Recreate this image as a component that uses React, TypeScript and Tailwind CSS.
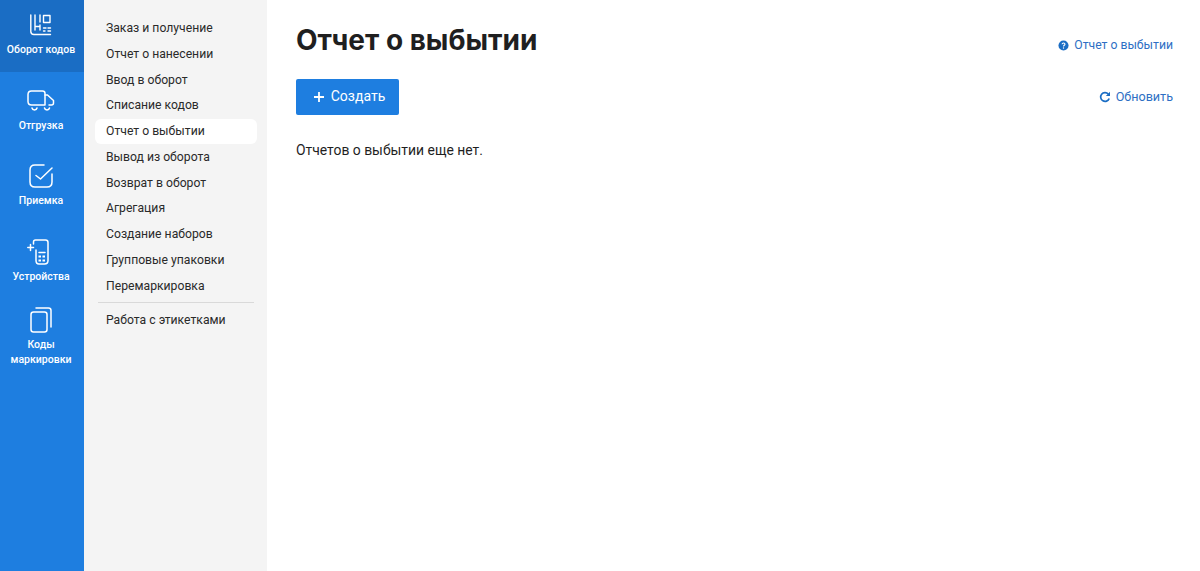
import React from "react"

const font = "font-['Roboto','Noto_Sans',sans-serif]"

const CodesIcon = () => (
  <svg width="22" height="22" viewBox="0 0 22 22" fill="none" stroke="white" strokeWidth="1.4" strokeLinecap="round" strokeLinejoin="round">
    <path d="M0.8 1V17.5C0.8 19.5 2 20.5 4 20.5H20.5" />
    <path d="M5 1V16M5 12.5H9M10 1V8M10 11V16" />
    <path d="M13.5 1.5H20V8.5H13.5V1.5Z" />
    <path d="M13.5 14H16M18 14H20.5M13.5 17H15M18 17H20.5" />
  </svg>
)

const TruckIcon = () => (
  <svg width="28" height="22" viewBox="0 0 28 22" fill="none" stroke="white" strokeWidth="1.5" strokeLinecap="round" strokeLinejoin="round">
    <path d="M4.5 1H15.5C17 1 18 2 18 3.5V15H4.5C2.5 15 1 13.5 1 11.5V4.5C1 2.5 2.5 1 4.5 1Z" />
    <path d="M18 5H20.5L26.5 10.5V13C26.5 14.2 25.7 15 24.5 15H22" />
    <path d="M5 18C5.5 20.5 9.5 20.5 10 18M17.5 18C18 20.5 22 20.5 22.5 18" />
  </svg>
)

const CheckIcon = () => (
  <svg width="24" height="24" viewBox="0 0 24 24" fill="none" stroke="white" strokeWidth="1.5" strokeLinecap="round" strokeLinejoin="round">
    <path d="M15 1H6C3 1 1 3 1 6V18C1 21 3 23 6 23H18C21 23 23 21 23 18V10" />
    <path d="M7 11.5L11.5 15L23 4" />
  </svg>
)

const DeviceIcon = () => (
  <svg className="mr-[6px]" width="22" height="26" viewBox="0 0 22 26" fill="none" stroke="white" strokeWidth="1.5" strokeLinecap="round" strokeLinejoin="round">
    <path d="M6.5 5V3C6.5 2 7.5 1 8.5 1H18.5C20 1 21 2 21 3.5V21.5C21 23.5 19.5 25 17.5 25H12C10 25 9 23.5 9 21.5V11" />
    <path d="M3.5 5.5V11.5M0.8 8.5H6.5" />
    <path d="M12 13.5H18" />
    <path d="M11.5 17.5H14M15.5 17.5H18M11.5 21.5H14M15.5 21.5H18" strokeWidth="2" strokeLinecap="butt" />
  </svg>
)

const CopyIcon = () => (
  <svg width="22" height="26" viewBox="0 0 22 26" fill="none" stroke="white" strokeWidth="1.5" strokeLinecap="round" strokeLinejoin="round">
    <path d="M6 1H18.5C20 1 21 2 21 3.5V20" />
    <path d="M3.5 5H14.5C16 5 17 6 17 7.5V22.5C17 24 16 25 14.5 25H3.5C2 25 1 24 1 22.5V7.5C1 6 2 5 3.5 5Z" />
  </svg>
)

const railItems = [
  { label: "Оборот кодов", icon: <CodesIcon />, box: "h-[72px] bg-[#1a6dc4] pt-[12px]" },
  { label: "Отгрузка", icon: <TruckIcon />, box: "h-[75.5px] pt-[16px]" },
  { label: "Приемка", icon: <CheckIcon />, box: "h-[75.5px] pt-[15.5px]" },
  { label: "Устройства", icon: <DeviceIcon />, box: "h-[68px] pt-[16px]" },
  { label: "Коды маркировки", icon: <CopyIcon />, box: "pt-[16px]" },
]

const menuItems = [
  "Заказ и получение",
  "Отчет о нанесении",
  "Ввод в оборот",
  "Списание кодов",
  "Отчет о выбытии",
  "Вывод из оборота",
  "Возврат в оборот",
  "Агрегация",
  "Создание наборов",
  "Групповые упаковки",
  "Перемаркировка",
]

const App = () => {
  return (
    <div className={`flex h-[571px] w-[1200px] overflow-hidden bg-white text-[#2a2a2a] ${font}`}>
      {/* Rail */}
      <aside className="flex w-[84px] flex-col bg-[#1e7ee0] text-white">
        {railItems.map((item) => (
          <div
            key={item.label}
            className={`flex flex-col items-center pr-[2px] text-center text-[10.5px] font-medium leading-[15px] ${item.box}`}
          >
            <div className="flex h-[26px] items-center justify-center">{item.icon}</div>
            <span className="mt-[3.5px] px-1">{item.label}</span>
          </div>
        ))}
      </aside>

      {/* Submenu */}
      <nav className="flex w-[183px] flex-col bg-[#f4f4f4] pl-[11px] pr-[10px] pt-[15.5px] text-[12.2px]">
        {menuItems.map((item) => (
          <div
            key={item}
            className={`flex h-[25.75px] items-center rounded-[6px] pl-[11px] ${
              item === "Отчет о выбытии" ? "bg-white" : ""
            }`}
          >
            {item}
          </div>
        ))}
        <div className="mx-[3px] mb-[4px] mt-[3.5px] h-px bg-[#d9d9d9]" />
        <div className="flex h-[25.75px] items-center pl-[11px]">Работа с этикетками</div>
      </nav>

      {/* Main */}
      <main className="flex flex-1 flex-col pl-[29px] pr-[27px]">
        <div className="flex items-center justify-between pt-[22px]">
          <h1 className="font-['Inter',sans-serif] text-[28px] font-[650] leading-[36px] text-[#1f1f1f]">Отчет о выбытии</h1>
          <a className="mt-[11px] flex items-center gap-[5.5px] text-[12.2px] text-[#2e6fc4]">
            <svg width="11" height="11" viewBox="0 0 12 12">
              <circle cx="6" cy="6" r="5.5" fill="#1a6dc4" />
              <path d="M4.4 4.6C4.5 3.7 5.2 3.2 6 3.2C6.9 3.2 7.6 3.8 7.6 4.6C7.6 5.7 6 5.7 6 7" fill="none" stroke="white" strokeWidth="1.2" />
              <circle cx="6" cy="8.7" r="0.75" fill="white" />
            </svg>
            Отчет о выбытии
          </a>
        </div>
        <div className="mt-[21px] flex items-center justify-between">
          <button className="flex h-[36px] w-[103px] items-center justify-center gap-[6px] rounded-[2px] bg-[#1e7ee0] pb-[1px] pl-[3px] text-[14px] text-white">
            <svg width="12" height="12" viewBox="0 0 12 12" stroke="white" strokeWidth="1.8">
              <path d="M6 1V11M1 6H11" />
            </svg>
            Создать
          </button>
          <a className="flex items-center gap-[5px] text-[12.6px] text-[#2e6fc4]">
            <svg width="12" height="12" viewBox="0 0 12 12" fill="none" stroke="#1a6dc4" strokeWidth="1.7">
              <path d="M10.2 7.5A4.4 4.4 0 1 1 9.3 3" />
              <path d="M11 0.8V5H6.8Z" fill="#1a6dc4" stroke="none" />
            </svg>
            Обновить
          </a>
        </div>
        <p className="mt-[26px] text-[13.9px] leading-[18px] text-[#1f1f1f]">Отчетов о выбытии еще нет.</p>
      </main>
    </div>
  )
}

export default App
